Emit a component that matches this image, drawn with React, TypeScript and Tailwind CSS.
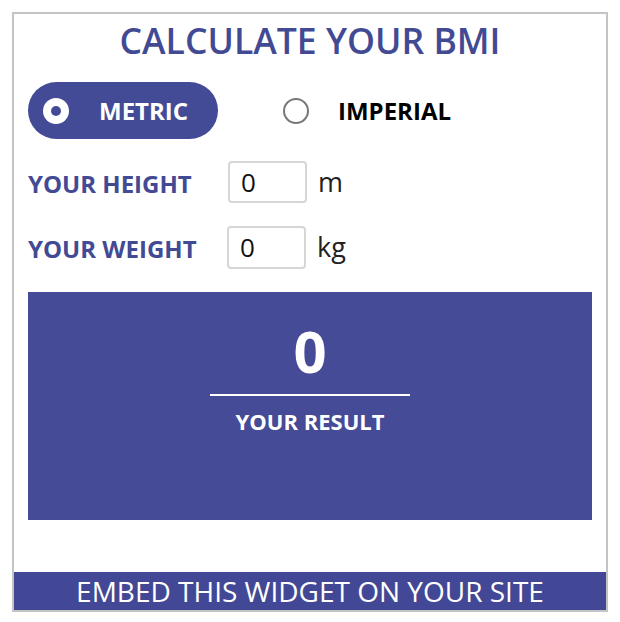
import React from "react";

export default function App() {
  const font = { fontFamily: '"Open Sans", "Noto Sans", sans-serif' };
  return (
    <div className="p-3 bg-white w-[620px] h-[622px]" style={font}>
      <div className="w-[596px] h-[600px] border-2 border-[#c4c4c4] flex flex-col bg-white">
        <div className="h-[54px] flex items-center justify-center text-[35.6px] font-semibold text-[#434a94] leading-none">
          CALCULATE YOUR BMI
        </div>
        <div className="px-[14px]">
          <div className="mt-[14px] flex items-center">
            <div className="w-[190px] h-[57px] rounded-full bg-[#444b96] flex items-center pl-[15px]">
              <div className="w-[26px] h-[26px] rounded-full bg-white flex items-center justify-center">
                <div className="w-[10px] h-[10px] rounded-full bg-[#444b96]" />
              </div>
              <span className="ml-[30px] text-white font-bold text-[24px] leading-none">METRIC</span>
            </div>
            <div className="ml-[65px] w-[26px] h-[26px] rounded-full border-2 border-[#777]" />
            <span className="ml-[29px] text-black font-bold text-[24px] leading-none">IMPERIAL</span>
          </div>
          <div className="mt-[22px] flex items-center">
            <span className="w-[200px] pt-[3px] text-[#434a94] font-bold text-[24px] leading-none">YOUR HEIGHT</span>
            <div className="w-[79px] h-[42px] border-2 border-[#d6d6d6] rounded-[4px] flex items-center pl-[11px] text-[26px] text-[#111]">0</div>
            <span className="ml-[11px] text-[27px] text-[#222]">m</span>
          </div>
          <div className="mt-[23px] flex items-center">
            <span className="w-[199px] pt-[3px] text-[#434a94] font-bold text-[24px] leading-none">YOUR WEIGHT</span>
            <div className="w-[79px] h-[43px] border-2 border-[#d6d6d6] rounded-[4px] flex items-center pl-[11px] text-[26px] text-[#111]">0</div>
            <span className="ml-[11px] text-[27px] text-[#222]">kg</span>
          </div>
          <div className="mt-[23px] h-[228px] bg-[#454b96] flex flex-col items-center">
            <div className="mt-[29px] text-white font-bold text-[58px] leading-none h-[60px] flex items-center">0</div>
            <div className="mt-[13px] w-[200px] h-[2px] bg-white" />
            <div className="mt-[14px] text-white font-bold text-[22px] leading-none">YOUR RESULT</div>
          </div>
        </div>
        <div className="flex-1" />
        <div className="h-[38px] bg-[#424895] flex items-center justify-center text-white text-[28px] leading-none">
          EMBED THIS WIDGET ON YOUR SITE
        </div>
      </div>
    </div>
  );
}
